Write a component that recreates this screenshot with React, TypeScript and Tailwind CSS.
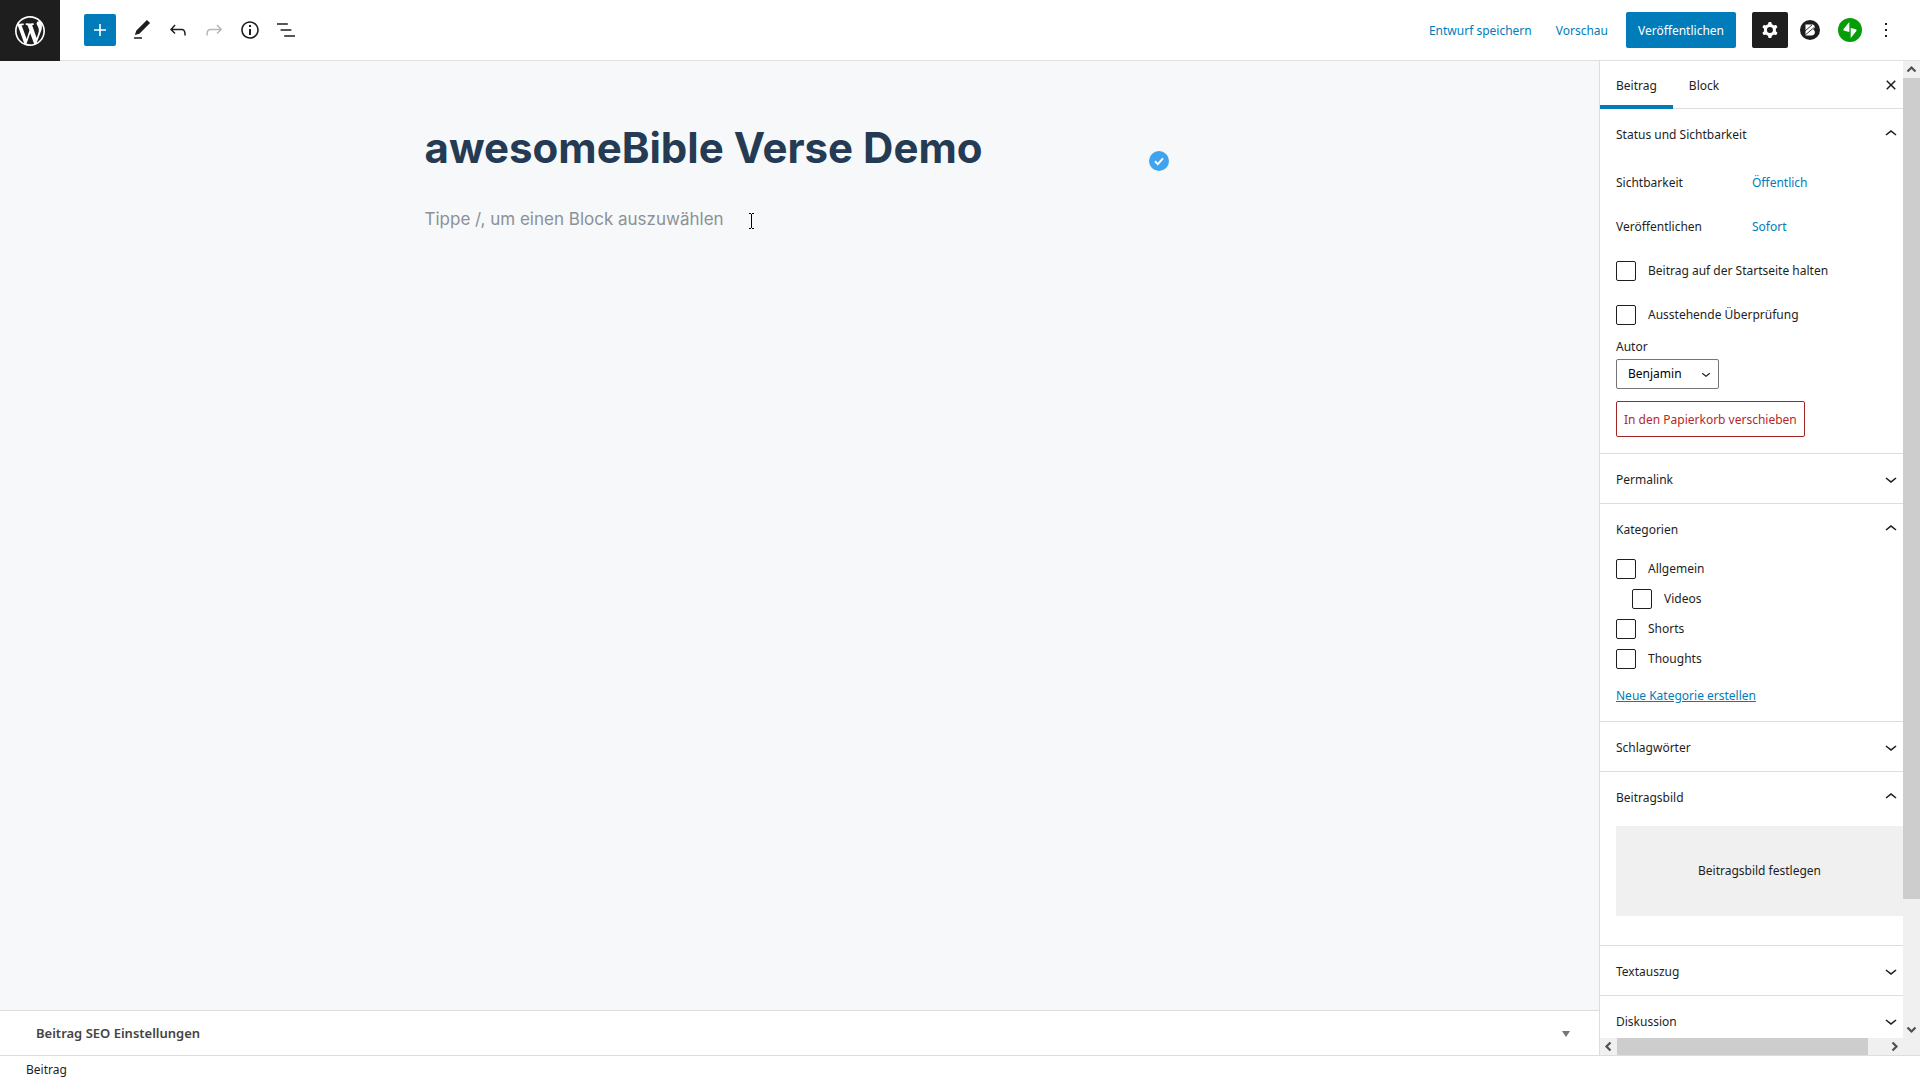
import React, { useState } from "react";

const PATHS = {
  plus: "M18 11.2h-5.2V6h-1.6v5.2H6v1.6h5.2V18h1.6v-5.2H18z",
  edit: "M20.1 5.1L16.9 2 6.2 12.7l-1.3 4.4 4.5-1.3L20.1 5.1zM4 20.8h8v-1.5H4v1.5z",
  undo: "M18.3 11.7c-.6-.6-1.4-.9-2.3-.9H6.7l2.9-3.3-1.1-1-4.5 5L8.5 16l1-1-2.7-2.7H16c.5 0 .9.2 1.3.5 1 1 1 3.4 1 4.5v.3h1.5v-.2c0-1.5 0-4.3-1.5-5.7z",
  redo: "M15.6 6.5l-1.1 1 2.9 3.3H8c-.9 0-1.7.3-2.3.9-1.4 1.5-1.4 4.2-1.4 5.6v.2h1.5v-.3c0-1.1 0-3.5 1-4.5.3-.3.7-.5 1.3-.5h9.2L14.5 15l1.1 1.1 4.6-4.6-4.6-5z",
  info: "M12 3.2c-4.8 0-8.8 3.9-8.8 8.8 0 4.8 3.9 8.8 8.8 8.8 4.8 0 8.8-3.9 8.8-8.8 0-4.8-4-8.8-8.8-8.8zm0 16c-4 0-7.2-3.3-7.2-7.2C4.8 8 8 4.8 12 4.8s7.2 3.3 7.2 7.2c0 4-3.2 7.2-7.2 7.2zM11 17h2v-6h-2v6zm0-8h2V7h-2v2z",
  list: "M13.8 5.2H3v1.5h10.8V5.2zm-3.6 12v1.5H21v-1.5H10.2zm7.2-6H6.6v1.5h10.8v-1.5z",
  cog: "M10.289 4.836A1 1 0 0111.275 4h1.306a1 1 0 01.987.836l.244 1.466c.787.26 1.503.679 2.108 1.218l1.393-.522a1 1 0 011.216.437l.653 1.13a1 1 0 01-.23 1.273l-1.148.944a6.025 6.025 0 010 2.435l1.149.946a1 1 0 01.23 1.272l-.653 1.13a1 1 0 01-1.216.437l-1.394-.522c-.605.54-1.32.958-2.108 1.218l-.244 1.466a1 1 0 01-.987.836h-1.306a1 1 0 01-.986-.836l-.244-1.466a5.995 5.995 0 01-2.108-1.218l-1.394.522a1 1 0 01-1.217-.436l-.653-1.131a1 1 0 01.23-1.272l1.149-.946a6.026 6.026 0 010-2.435l-1.148-.944a1 1 0 01-.23-1.272l.653-1.131a1 1 0 011.217-.437l1.393.522a5.994 5.994 0 012.108-1.218l.244-1.466zM14.929 12a3 3 0 11-6 0 3 3 0 016 0z",
  more: "M13 19h-2v-2h2v2zm0-6h-2v-2h2v2zm0-6h-2V5h2v2z",
  down: "M17.5 11.6L12 16l-5.5-4.4.9-1.2L12 14l4.5-3.6 1 1.2z",
  up: "M6.5 12.4L12 8l5.5 4.4-.9 1.2L12 10l-4.5 3.6-1-1.2z",
  close: "M12 13.06l3.712 3.713 1.061-1.06L13.061 12l3.712-3.712-1.06-1.06L12 10.938 8.288 7.227l-1.061 1.06L10.939 12l-3.712 3.712 1.06 1.061L12 13.061z",
};

function Icon({ name, className = "size-6" }: { name: keyof typeof PATHS; className?: string }) {
  return (
    <svg viewBox="0 0 24 24" className={className} fill="currentColor" fillRule="evenodd" aria-hidden="true">
      <path d={PATHS[name]} />
    </svg>
  );
}

function WordPressLogo() {
  return (
    <svg viewBox="-2 -2 24 24" className="size-9" fill="currentColor" aria-hidden="true">
      <path d="M20 10c0-5.51-4.49-10-10-10C4.48 0 0 4.49 0 10c0 5.52 4.48 10 10 10 5.51 0 10-4.48 10-10zM7.78 15.37L4.37 6.22c.55-.02 1.17-.08 1.17-.08.5-.06.44-1.13-.06-1.11 0 0-1.45.11-2.37.11-.18 0-.37 0-.58-.01C4.12 2.69 6.87 1.11 10 1.11c2.33 0 4.45.87 6.05 2.34-.68-.11-1.65.39-1.65 1.58 0 .74.45 1.36.9 2.1.35.61.55 1.36.55 2.46 0 1.49-1.4 5-1.4 5l-3.03-8.37c.54-.02.82-.17.82-.17.5-.05.44-1.25-.06-1.22 0 0-1.44.12-2.38.12-.87 0-2.33-.12-2.33-.12-.5-.03-.56 1.2-.06 1.22l.92.08 1.26 3.41zM17.41 10c.24-.64.74-1.87.43-4.25.7 1.29 1.05 2.71 1.05 4.25 0 3.29-1.73 6.24-4.4 7.78.97-2.59 1.94-5.2 2.92-7.78zM6.1 18.09C3.12 16.65 1.11 13.53 1.11 10c0-1.3.23-2.48.72-3.59C3.25 10.3 4.67 14.2 6.1 18.09zm4.03-6.63l2.58 6.98c-.86.29-1.76.45-2.71.45-.79 0-1.57-.11-2.29-.33.81-2.38 1.62-4.74 2.42-7.1z" />
    </svg>
  );
}

function BlocksLogo() {
  return (
    <svg viewBox="0 0 20 20" className="size-5" aria-hidden="true">
      <circle cx="10" cy="10" r="10" fill="#1e1e1e" />
      <path d="M5.5 4.500h6.700c2.300 0 3.300 2.600 1.800 4.300l-.8.700c2.800 1.300 2 6-1.400 6H5.500z" fill="#fff" />
      <path d="M5 11L12 5M5.500 14.800L14 7.600" stroke="#1e1e1e" strokeWidth=".9" />
    </svg>
  );
}

function JetpackLogo() {
  return (
    <svg viewBox="0 0 24 24" className="size-6" aria-hidden="true">
      <circle cx="12" cy="12" r="12" fill="#069e08" />
      <path d="M11.300 4v10.100L6.300 12.800c-.8-.2-1.100-1-.7-1.700zM12.700 20V9.900l5 1.300c.8.200 1.100 1 .7 1.700z" fill="#fff" />
    </svg>
  );
}

function ToolButton({ label, name, muted }: { label: string; name: keyof typeof PATHS; muted?: boolean }) {
  return (
    <button type="button" aria-label={label} disabled={muted} className={muted ? "flex size-9 items-center justify-center text-[#b8b8b8]" : "flex size-9 items-center justify-center"}>
      <Icon name={name} />
    </button>
  );
}

function Header() {
  return (
    <header className="flex h-[61px] shrink-0 items-stretch border-b border-[#e0e0e0] bg-white">
      <a href="#posts" aria-label="Alle Beiträge ansehen" className="-mb-px flex w-[60px] items-center justify-center bg-[#1e1e1e] text-white">
        <WordPressLogo />
      </a>
      <div className="flex items-center pl-6">
        <button type="button" aria-label="Block hinzufügen" className="mr-2 flex size-8 items-center justify-center rounded-xs bg-[#007cba] text-white">
          <Icon name="plus" />
        </button>
        <ToolButton label="Werkzeuge" name="edit" />
        <ToolButton label="Rückgängig" name="undo" />
        <ToolButton label="Wiederholen" name="redo" muted />
        <ToolButton label="Details" name="info" />
        <ToolButton label="Listenansicht" name="list" />
      </div>
      <div className="ml-auto flex items-center pr-[22px]">
        <button type="button" className="h-9 px-3 pt-0.5 text-[#007cba]">Entwurf speichern</button>
        <button type="button" className="h-9 px-3 pt-0.5 text-[#007cba]">Vorschau</button>
        <button type="button" className="mx-1.5 h-9 rounded-xs bg-[#007cba] px-3 pt-0.5 text-white">Veröffentlichen</button>
        <button type="button" aria-label="Einstellungen" className="ml-2.5 flex size-9 items-center justify-center rounded-xs bg-[#1e1e1e] text-white">
          <Icon name="cog" />
        </button>
        <button type="button" aria-label="Blocks" className="ml-3"><BlocksLogo /></button>
        <button type="button" aria-label="Jetpack" className="ml-[18px]"><JetpackLogo /></button>
        <button type="button" aria-label="Optionen" className="ml-3"><Icon name="more" /></button>
      </div>
    </header>
  );
}

function Panel({ title, open, children }: { title: string; open?: boolean; children?: React.ReactNode }) {
  return (
    <section className="border-b border-[#dddddd]">
      <h2>
        <button type="button" aria-expanded={!!open} className="flex h-[49px] w-full items-center justify-between pl-4 text-left">
          <span className="pt-0.5">{title}</span>
          <Icon name={open ? "up" : "down"} />
        </button>
      </h2>
      {children}
    </section>
  );
}

function Check({ label }: { label: string }) {
  return (
    <label className="flex items-center gap-3">
      <input type="checkbox" className="size-5 shrink-0 appearance-none rounded-xs border border-[#1e1e1e] bg-white checked:bg-[#007cba]" />
      {label}
    </label>
  );
}

function Arrow({ d }: { d: string }) {
  return (
    <svg viewBox="0 0 17 17" className="size-[17px] shrink-0" fill="none" stroke="#505050" strokeWidth="2.200" aria-hidden="true">
      <path d={d} />
    </svg>
  );
}

function Sidebar() {
  const [author, setAuthor] = useState("Benjamin");
  return (
    <aside className="grid w-[321px] shrink-0 grid-cols-[1fr_17px] grid-rows-[1fr_17px] border-l border-[#dddddd] bg-white">
      <div className="min-h-0 overflow-hidden">
        <div className="flex h-12 border-b border-[#dddddd]">
          <button type="button" className="-mb-px border-b-4 border-[#007cba] px-4 pt-1.5">Beitrag</button>
          <button type="button" className="px-4 pt-0.5">Block</button>
          <button type="button" aria-label="Schließen" className="ml-auto"><Icon name="close" /></button>
        </div>
        <Panel title="Status und Sichtbarkeit" open>
          <div className="flex flex-col gap-2 px-4 pt-[7px]">
            <div className="flex h-9 items-center">
              <span className="w-[136px]">Sichtbarkeit</span>
              <button type="button" className="text-[#007cba]">Öffentlich</button>
            </div>
            <div className="flex h-9 items-center">
              <span className="w-[136px]">Veröffentlichen</span>
              <button type="button" className="text-[#007cba]">Sofort</button>
            </div>
            <div className="flex h-9 items-center"><Check label="Beitrag auf der Startseite halten" /></div>
            <div className="flex h-9 items-center"><Check label="Ausstehende Überprüfung" /></div>
          </div>
          <div className="flex flex-col items-start px-4 pt-1 pb-4">
            <label htmlFor="author" className="mb-0.5 leading-5">Autor</label>
            <div className="relative">
              <select id="author" value={author} onChange={(e) => setAuthor(e.target.value)} className="h-[30px] w-[103px] appearance-none rounded-xs border border-[#757575] bg-white pl-[11px] text-black">
                <option>Benjamin</option>
              </select>
              <Icon name="down" className="pointer-events-none absolute top-1.5 right-1 size-[18px]" />
            </div>
            <button type="button" className="mt-3 h-9 rounded-xs border border-[#a02622] px-[7px] pt-0.5 whitespace-nowrap text-[#b52727]">
              In den Papierkorb verschieben
            </button>
          </div>
        </Panel>
        <Panel title="Permalink" />
        <Panel title="Kategorien" open>
          <div className="flex flex-col items-start gap-2.5 px-4 pt-1.5 pb-[15px]">
            <Check label="Allgemein" />
            <div className="pl-4"><Check label="Videos" /></div>
            <Check label="Shorts" />
            <Check label="Thoughts" />
            <a href="#new-category" className="mt-[7px] leading-5 text-[#007cba] underline">Neue Kategorie erstellen</a>
          </div>
        </Panel>
        <Panel title="Schlagwörter" />
        <Panel title="Beitragsbild" open>
          <div className="pt-[5px] pb-[29px] pl-4">
            <button type="button" className="h-[90px] w-full bg-[#f0f0f0]">Beitragsbild festlegen</button>
          </div>
        </Panel>
        <Panel title="Textauszug" />
        <Panel title="Diskussion" />
      </div>
      <div className="flex flex-col bg-[#f0f0f0]">
        <Arrow d="M4.500 10.500l4-4 4 4" />
        <div className="grow-[821] bg-[#cdcdcd]" />
        <div className="grow-[122]" />
        <Arrow d="M4.500 6.500l4 4 4-4" />
      </div>
      <div className="flex bg-[#f0f0f0]">
        <Arrow d="M10.500 4.500l-4 4 4 4" />
        <div className="grow-[251] bg-[#cdcdcd]" />
        <div className="grow-[18]" />
        <Arrow d="M6.500 4.500l4 4-4 4" />
      </div>
      <div className="bg-[#f0f0f0]" />
    </aside>
  );
}

function Editor() {
  return (
    <main className="flex min-w-0 grow flex-col bg-[#f6f8fa]">
      <div className="min-h-0 grow pt-[54px]">
        <div className="mx-auto max-w-[750px]">
          <div className="flex items-start justify-between pr-1.5">
            <h1 className="font-[Inter] text-[42px] leading-[66px] font-bold text-[#243b53]">awesomeBible Verse Demo</h1>
            <svg viewBox="0 0 20 20" className="mt-9 size-5 shrink-0" role="img" aria-label="Geprüft">
              <circle cx="10" cy="10" r="10" fill="#3fa4ef" />
              <path d="M6 10.300l2.800 2.800L14 7.300" fill="none" stroke="#fff" strokeWidth="2" />
            </svg>
          </div>
          <div className="mt-6 flex items-center gap-6">
            <p className="font-[Inter] text-[17px] leading-7 text-[#8b9196]">Tippe /, um einen Block auszuwählen</p>
            <svg viewBox="0 0 7 16" className="mt-1 h-4 w-[7px]" fill="none" stroke="#000" aria-hidden="true">
              <path d="M1 .5h2M4 .5h2M3.500 1v14M1 15.500h2M4 15.500h2" />
            </svg>
          </div>
        </div>
      </div>
      <button type="button" className="flex h-[45px] shrink-0 items-center justify-between border-t border-[#dddddd] bg-white pt-0.5 pr-[29px] pl-9 text-[13px] font-semibold text-[#444444]">
        Beitrag SEO Einstellungen
        <svg viewBox="0 0 8 6" className="h-1.5 w-2" fill="#72777c" aria-hidden="true"><path d="M0 0h8L4 6z" /></svg>
      </button>
    </main>
  );
}

export default function App() {
  return (
    <div className="flex h-screen flex-col overflow-hidden bg-white font-['Noto_Sans',sans-serif] text-xs text-[#1e1e1e]">
      <Header />
      <div className="flex min-h-0 grow">
        <Editor />
        <Sidebar />
      </div>
      <footer className="flex h-[25px] shrink-0 items-center border-t border-[#dddddd] px-[26px] pb-1">
        <span className="pt-2">Beitrag</span>
      </footer>
    </div>
  );
}
